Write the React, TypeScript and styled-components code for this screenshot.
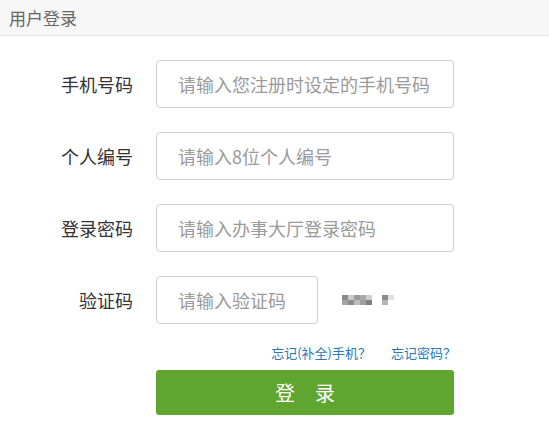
import styled, { createGlobalStyle } from "styled-components";

const GlobalStyle = createGlobalStyle`
  body {
    margin: 0;
    background: #fff;
    font-family: "Noto Sans CJK SC", "Noto Sans", sans-serif;
  }
`;

const Panel = styled.div`
  width: 549px;
`;

const Header = styled.div`
  height: 35px;
  background: #f7f7f7;
  border-bottom: 1px solid #e6e6e6;
  display: flex;
  align-items: center;
  padding-left: 9px;
  font-size: 17px;
  color: #666;
`;

const Form = styled.form`
  display: flex;
  flex-direction: column;
  padding-top: 24px;
`;

const Row = styled.div`
  display: flex;
  align-items: center;
  gap: 23px;
  height: 48px;
  margin-bottom: 24px;
`;

const Label = styled.label`
  width: 133px;
  text-align: right;
  font-size: 18px;
  color: #333;
`;

const Input = styled.input<{ $width?: number }>`
  box-sizing: border-box;
  width: ${({ $width }) => $width ?? 298}px;
  height: 48px;
  border: 1px solid #cfcfcf;
  border-radius: 4px;
  padding: 0 0 0 21px;
  font-family: inherit;
  font-size: 18px;
  color: #333;
  outline: none;
  &::placeholder {
    color: #9a9a9a;
  }
`;

const Captcha = styled.svg`
  margin-left: 1px;
`;

const Links = styled.div`
  display: flex;
  justify-content: flex-end;
  gap: 20px;
  width: 456px;
  margin-top: -5px;
  font-size: 13px;
`;

const Link = styled.a`
  color: #2878b6;
  text-decoration: none;
  cursor: pointer;
`;

const Submit = styled.button`
  margin: 8px 0 0 156px;
  width: 298px;
  height: 45px;
  border: none;
  border-radius: 3px;
  background: #5ea62f;
  color: #fff;
  font-family: inherit;
  font-size: 20px;
  letter-spacing: 20px;
  text-indent: 20px;
  cursor: pointer;
`;

const fields = [
  { label: "手机号码", placeholder: "请输入您注册时设定的手机号码" },
  { label: "个人编号", placeholder: "请输入8位个人编号" },
  { label: "登录密码", placeholder: "请输入办事大厅登录密码", type: "password" },
];

const blocks: [number, number, string][] = [
  [0, 0, "#8a8a8a"], [6, 0, "#c9c9c9"], [12, 0, "#9a9a9a"], [18, 0, "#a8a8a8"], [24, 0, "#cfcfcf"],
  [0, 5, "#a4a4a4"], [6, 5, "#8c8c8c"], [12, 5, "#bdbdbd"], [18, 5, "#9e9e9e"], [24, 5, "#7f7f7f"],
  [40, 0, "#8a8a8a"], [40, 5, "#b5b5b5"], [46, 0, "#e0e0e0"],
];

const App = () => (
  <>
    <GlobalStyle />
    <Panel>
      <Header>用户登录</Header>
      <Form onSubmit={(e) => e.preventDefault()}>
        {fields.map((f) => (
          <Row key={f.label}>
            <Label>{f.label}</Label>
            <Input type={f.type ?? "text"} placeholder={f.placeholder} />
          </Row>
        ))}
        <Row>
          <Label>验证码</Label>
          <Input $width={162} placeholder="请输入验证码" />
          <Captcha width="56" height="12" viewBox="0 0 56 12">
            {blocks.map(([x, y, c], i) => (
              <rect key={i} x={x} y={y + 1} width="6" height="5" fill={c} />
            ))}
          </Captcha>
        </Row>
        <Links>
          <Link>忘记(补全)手机？</Link>
          <Link>忘记密码？</Link>
        </Links>
        <Submit type="submit">登录</Submit>
      </Form>
    </Panel>
  </>
);

export default App;
